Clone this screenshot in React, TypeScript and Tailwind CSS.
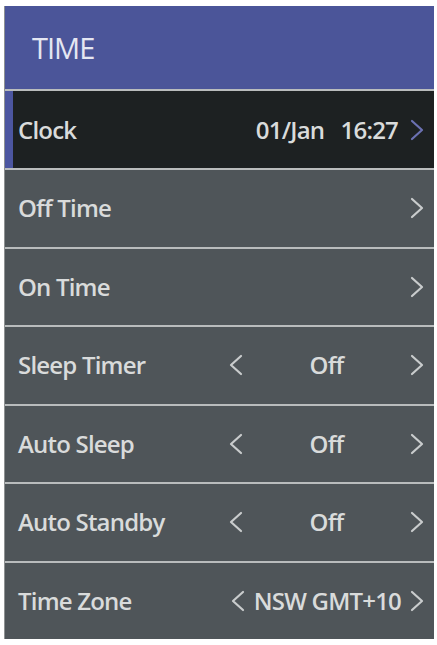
import React from "react";

const Chevron = ({ dir, color = "#c9cccd" }: { dir: "l" | "r"; color?: string }) => (
  <svg width="14" height="22" viewBox="0 0 14 22" className="shrink-0">
    <polyline
      points={dir === "r" ? "2,2 12,11 2,20" : "12,2 2,11 12,20"}
      fill="none"
      stroke={color}
      strokeWidth="2.2"
      strokeLinecap="round"
      strokeLinejoin="round"
    />
  </svg>
);

type Row = { label: string; kind: "link" | "select"; value?: string };

const rows: Row[] = [
  { label: "Off Time", kind: "link" },
  { label: "On Time", kind: "link" },
  { label: "Sleep Timer", kind: "select", value: "Off" },
  { label: "Auto Sleep", kind: "select", value: "Off" },
  { label: "Auto Standby", kind: "select", value: "Off" },
];

const txt = "text-[24px] font-semibold text-[#d9dbdb] tracking-[-0.8px]";

export default function App() {
  return (
    <div
      className="w-[437px] h-[645px] bg-white pt-[6px] pl-[4px] pr-[3px]"
      style={{ fontFamily: '"Open Sans", "Noto Sans", sans-serif' }}
    >
      <div className="w-[430px] flex flex-col border-l border-[#8e9192]">
        <div className="h-[83px] bg-[#4b5599] flex items-center pl-[27px]">
          <span className="text-[29px] font-normal text-[#e4e6f2] tracking-[-1px]">TIME</span>
        </div>
        <div className="h-[79px] border-t-2 border-[#b9bcbd] bg-[#1d2122] flex items-center">
          <div className="w-[8px] self-stretch bg-[#4c56a0]" />
          <span className={`ml-[5px] ${txt}`}>Clock</span>
          <span className={`ml-auto whitespace-pre ${txt} tracking-[-0.4px]`}>01/Jan   16:27</span>
          <div className="ml-[12px] mr-[10px]">
            <Chevron dir="r" color="#6b71b2" />
          </div>
        </div>
        {rows.map((r) => (
          <div
            key={r.label}
            className="h-[78.5px] border-t-2 border-[#b9bcbd] bg-[#4f5559] flex items-center pl-[13px]"
          >
            <span className={txt}>{r.label}</span>
            {r.kind === "select" ? (
              <div className="ml-auto flex items-center">
                <Chevron dir="l" />
                <span className={`w-[167px] text-center ${txt}`}>{r.value}</span>
                <div className="mr-[10px]">
                  <Chevron dir="r" />
                </div>
              </div>
            ) : (
              <div className="ml-auto mr-[10px]">
                <Chevron dir="r" />
              </div>
            )}
          </div>
        ))}
        <div className="h-[78px] border-t-2 border-[#b9bcbd] bg-[#4f5559] flex items-center pl-[13px]">
          <span className={txt}>Time Zone</span>
          <div className="ml-auto flex items-center">
            <Chevron dir="l" />
            <span className={`ml-[9px] mr-[9px] ${txt} tracking-[-0.7px]`}>NSW GMT+10</span>
            <div className="mr-[10px]">
              <Chevron dir="r" />
            </div>
          </div>
        </div>
      </div>
    </div>
  );
}
